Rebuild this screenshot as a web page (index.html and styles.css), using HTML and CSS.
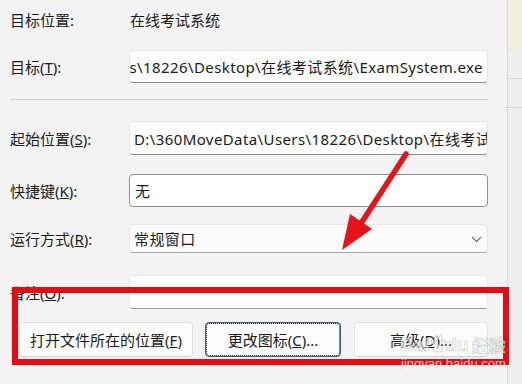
FILE: index.html
```html
<!DOCTYPE html>
<html lang="zh-CN">
<head>
<meta charset="utf-8">
<title>属性</title>
<link rel="stylesheet" href="styles.css">
</head>
<body>
<div class="page">
  <main class="dialog">
    <div class="row r1">
      <div class="label">目标位置:</div>
      <div class="value">在线考试系统</div>
    </div>
    <div class="row r2">
      <div class="label">目标(<u>T</u>):</div>
      <div class="field field-end"><span>C:\Users\18226\Desktop\在线考试系统\ExamSystem.exe</span></div>
    </div>
    <div class="sep"></div>
    <div class="row r3">
      <div class="label">起始位置(<u>S</u>):</div>
      <div class="field"><span>D:\360MoveData\Users\18226\Desktop\在线考试系统</span></div>
    </div>
    <div class="row r4">
      <div class="label">快捷键(<u>K</u>):</div>
      <div class="field field-focus"><span>无</span></div>
    </div>
    <div class="row r5">
      <div class="label">运行方式(<u>R</u>):</div>
      <div class="field select"><span>常规窗口</span>
        <svg class="chev" width="11" height="7" viewBox="0 0 11 7"><path d="M1 1 L5.5 5.5 L10 1" fill="none" stroke="#6b6b6b" stroke-width="1.1"/></svg>
      </div>
    </div>
    <div class="row r6">
      <div class="label">备注(<u>O</u>):</div>
      <div class="field"></div>
    </div>
    <div class="buttons">
      <button class="btn b1">打开文件所在的位置(<u>F</u>)</button>
      <button class="btn b2 focus">更改图标(<u>C</u>)...</button>
      <button class="btn b3">高级(<u>D</u>)...</button>
    </div>
  </main>
  <aside class="side">
    <div class="side-top"></div>
    <div class="side-line l1"></div>
    <div class="side-line l2"></div>
  </aside>

  <div class="redbox"></div>
  <svg class="arrow" width="522" height="384" viewBox="0 0 522 384">
    <line x1="406" y1="154" x2="358" y2="228" stroke="#e8121a" stroke-width="5.5" stroke-linecap="round"/>
    <polygon points="342,250 350,214 372,229" fill="#e8121a"/>
  </svg>
  <div class="wm"><span>Bai</span><svg class="paw" width="16" height="18" viewBox="0 0 16 18"><g fill="rgba(255,255,255,0.6)" stroke="rgba(150,150,150,0.5)" stroke-width="0.8"><ellipse cx="3" cy="7" rx="2" ry="2.6"/><ellipse cx="6.5" cy="3" rx="2" ry="2.6"/><ellipse cx="10.5" cy="3.2" rx="2" ry="2.6"/><ellipse cx="13.5" cy="7.5" rx="2" ry="2.6"/><path d="M3.5 15 C4 10.5 7 9.5 8 9.5 C9.5 9.5 12 11 12.5 15 C12.5 17 10 17.5 8 16.5 C6 17.5 3.5 17 3.5 15 Z"/></g></svg><span>du</span><span class="cn">经验</span></div>
  <div class="wm-url">jingyan.baidu.com</div>
</div>
</body>
</html>
```
FILE: styles.css
```css
* { box-sizing: border-box; }
html, body { margin: 0; padding: 0; }
body {
  width: 522px;
  height: 384px;
  overflow: hidden;
  background: #f3f3f3;
  font-family: "Noto Sans", "Noto Sans CJK SC", sans-serif;
  font-size: 15px;
  color: #1b1b1b;
}
.page {
  position: relative;
  width: 522px;
  height: 384px;
  display: flex;
}
.dialog {
  width: 507px;
  padding-left: 10px;
  display: flex;
  flex-direction: column;
}
.row {
  display: flex;
  align-items: center;
}
.label {
  width: 119px;
  flex: none;
  white-space: nowrap;
}
.value { padding-left: 1px; }
.r1 { height: 38px; }
.r2 { margin-top: 12px; height: 33px; }
.sep {
  margin-top: 16px;
  width: 478px;
  height: 1px;
  background: #cfcfcf;
}
.r3 { margin-top: 21px; height: 34px; }
.r4 { margin-top: 19px; height: 33px; }
.r5 { margin-top: 17px; height: 29px; }
.r6 { margin-top: 22px; height: 34px; }
.field {
  width: 359px;
  height: 100%;
  background: #fdfdfd;
  border: 1px solid #e6e6e6;
  border-bottom: 1px solid #8c8c8c;
  border-radius: 4px;
  display: flex;
  align-items: center;
  padding: 0 4px;
  overflow: hidden;
  white-space: nowrap;
  letter-spacing: 0.4px;
}
.field-end {
  justify-content: flex-end;
}
.field-end span { flex: none; }
.field-focus {
  border: 1px solid #8f8f8f;
  background: #ffffff;
  padding-left: 5px;
}
.select {
  background: #fbfbfb;
  position: relative;
  border-bottom-color: #a8a8a8;
}
.chev {
  position: absolute;
  right: 5px;
  top: 11px;
}
.r6 .field {
  border-color: #ebebeb;
  border-bottom-color: #9a9a9a;
}
.buttons {
  margin-top: 13px;
  height: 35px;
  display: flex;
  padding-left: 9px;
}
.btn {
  font-family: inherit;
  font-size: 15px;
  color: #1b1b1b;
  background: #fdfdfd;
  border: 1px solid #e2e2e2;
  border-bottom-color: #cfcfcf;
  border-radius: 4px;
  height: 35px;
  padding: 0;
}
.b1 { width: 174px; }
.b2 { width: 136px; margin-left: 12px; }
.b3 { width: 134px; margin-left: 13px; }
.focus {
  border: 1px solid #3c5a74;
  outline: 1px dotted #111;
  outline-offset: -2px;
}
.side {
  flex: 1;
  border-left: 1px solid #d9d9d9;
  background: #efefef;
  position: relative;
}
.side-top {
  height: 50px;
  background: #f1efdc;
}
.side-line {
  height: 1px;
  background: #d8d8d8;
  margin-top: 28px;
}
.redbox {
  position: absolute;
  left: 12px;
  top: 287px;
  width: 497px;
  height: 78px;
  border: 6px solid #e60a12;
}
.arrow {
  position: absolute;
  left: 0;
  top: 0;
}
.wm {
  position: absolute;
  left: 400px;
  top: 334px;
  display: flex;
  align-items: flex-end;
  font-family: "Liberation Sans", sans-serif;
  font-size: 19px;
  font-weight: bold;
  line-height: 22px;
  color: rgba(255, 255, 255, 0.6);
  -webkit-text-stroke: 0.7px rgba(150, 150, 150, 0.5);
}
.wm .paw { margin: 0 0 3px 0; }
.wm .cn {
  font-family: "Noto Sans CJK SC", sans-serif;
  font-size: 17px;
  margin-left: 3px;
}
.wm-url {
  position: absolute;
  left: 401px;
  top: 357px;
  font-family: "Liberation Sans", sans-serif;
  font-size: 13px;
  line-height: 14px;
  color: rgba(255, 232, 232, 0.85);
}
```
